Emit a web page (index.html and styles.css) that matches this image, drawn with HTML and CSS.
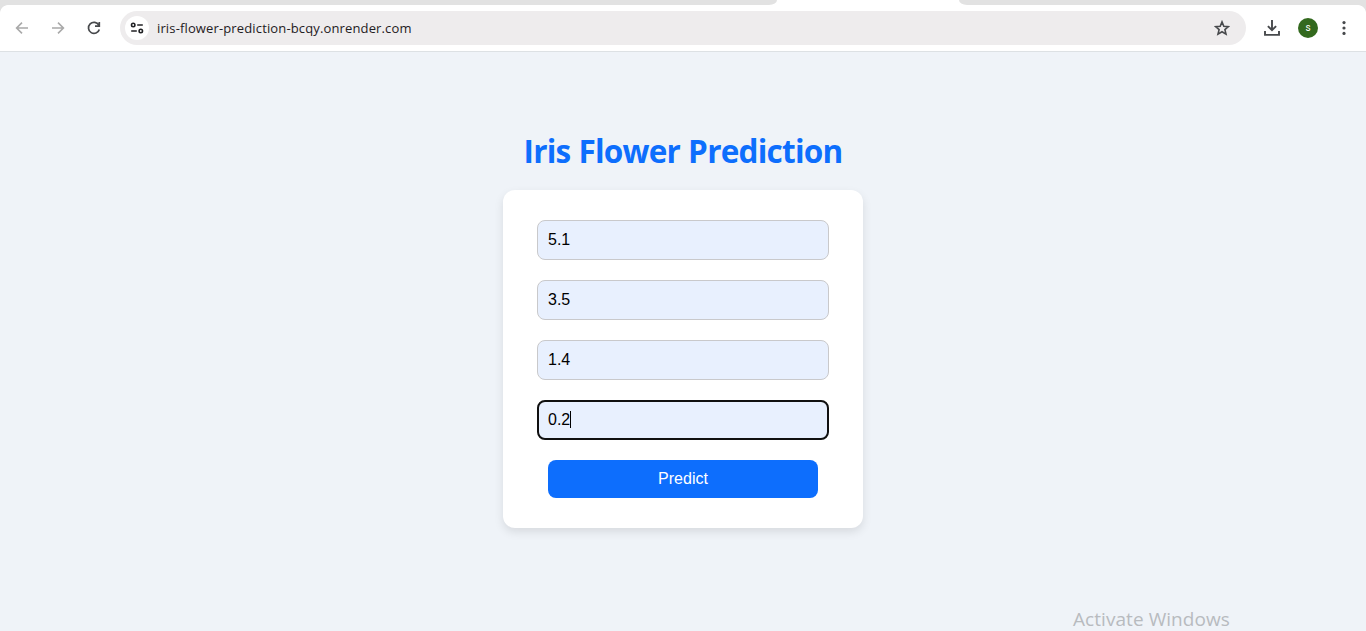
FILE: index.html
```html
<!DOCTYPE html>
<html lang="en">
<head>
<meta charset="utf-8">
<title>Iris Flower Prediction</title>
<link rel="stylesheet" href="styles.css">
</head>
<body>
<div class="tabstrip">
  <div class="tab-edge tab-edge-left"></div>
  <div class="tab-edge tab-edge-right"></div>
</div>
<header class="toolbar">
  <nav class="nav">
    <svg class="icon muted" viewBox="0 0 16 16"><path d="M14 8H2.8M8 2.6 2.6 8 8 13.4"/></svg>
    <svg class="icon muted" viewBox="0 0 16 16"><path d="M2 8h11.2M8 2.6 13.4 8 8 13.4"/></svg>
    <svg class="icon dark" viewBox="0 0 16 16"><path d="M12.8 5.2A5.5 5.5 0 1 0 13.3 9.4M13.3 2v4.2H9"/></svg>
  </nav>
  <div class="omnibox">
    <span class="site-info">
      <svg class="icon site-icon" viewBox="0 0 16 16"><circle cx="4.2" cy="5" r="1.7"/><path d="M8.2 5H13.8M2.2 11H7.8"/><circle cx="11.8" cy="11" r="1.7"/></svg>
    </span>
    <span class="url">iris-flower-prediction-bcqy.onrender.com</span>
    <svg class="icon star" viewBox="0 0 16 16"><path d="m8 1.9 1.8 4.3 4.6.4-3.5 3 1.1 4.5L8 11.7l-4 2.4 1.1-4.5-3.5-3 4.6-.4z"/></svg>
  </div>
  <div class="actions">
    <svg class="download" viewBox="0 0 16 16"><path d="M8 0v10M3.9 6.1 8 10.2l4.1-4.1M1 11v3.9h14V11"/></svg>
    <span class="avatar">s</span>
    <svg class="menu" viewBox="0 0 4 16"><circle cx="2" cy="2.6" r="1.6"/><circle cx="2" cy="8" r="1.6"/><circle cx="2" cy="13.4" r="1.6"/></svg>
  </div>
</header>
<main class="page">
  <h1 class="title">Iris Flower Prediction</h1>
  <form class="card">
    <input class="field" value="5.1">
    <input class="field" value="3.5">
    <input class="field" value="1.4">
    <div class="active-wrap">
      <input class="field field-active" value="0.2">
      <i class="caret"></i>
    </div>
    <button class="submit" type="button">Predict</button>
  </form>
</main>
<div class="watermark">Activate Windows</div>
</body>
</html>
```
FILE: styles.css
```css
* { box-sizing: border-box; }
body {
  margin: 0;
  height: 631px;
  overflow: hidden;
  background: #eff3f8;
  font-family: "Open Sans", "Noto Sans", sans-serif;
}
.tabstrip {
  height: 5px;
  display: flex;
  justify-content: space-between;
  background: #fff;
}
.tab-edge { background: #e2e2e2; }
.tab-edge-left { width: 777px; border-bottom-right-radius: 8px 5px; }
.tab-edge-right { width: 407px; border-bottom-left-radius: 8px 5px; }
.toolbar {
  height: 47px;
  display: flex;
  align-items: center;
  background: #fff;
  border-bottom: 1px solid #dde1e4;
  position: relative;
}
.toolbar::before,
.toolbar::after {
  content: "";
  position: absolute;
  top: 0;
  width: 8px;
  height: 8px;
}
.toolbar::before { left: 0; background: radial-gradient(circle at 8px 8px, transparent 7.5px, #e2e2e2 8.2px); }
.toolbar::after { right: 0; background: radial-gradient(circle at 0 8px, transparent 7.5px, #e2e2e2 8.2px); }
.icon { width: 16px; height: 16px; fill: none; stroke: #47494c; stroke-width: 1.6; flex: none; }
.nav { width: 120px; padding-left: 14px; display: flex; gap: 20px; flex: none; }
.muted { stroke: #a9a9a9; stroke-width: 1.6; }
.dark { stroke-width: 1.7; }
.omnibox {
  width: 1126px;
  height: 34px;
  padding: 0 16px 0 5px;
  display: flex;
  align-items: center;
  border-radius: 17px;
  background: #eeeced;
}
.site-info {
  width: 24px;
  height: 24px;
  display: grid;
  place-items: center;
  border-radius: 50%;
  background: #fff;
}
.site-icon { stroke: #202124; stroke-width: 1.6; }
.url { margin-left: 8px; flex: 1; color: #1f2023; font-size: 13px; line-height: 20px; letter-spacing: 0.14px; }
.star { stroke-width: 1.6; }
.actions { display: flex; align-items: center; padding-left: 18px; }
.download { width: 16px; height: 16px; fill: none; stroke: #47494c; stroke-width: 1.9; }
.avatar {
  width: 20px;
  height: 20px;
  margin: 0 24px 0 18px;
  border-radius: 50%;
  background: #33691e;
  color: #fff;
  font: 400 10px/19px Roboto, sans-serif;
  text-align: center;
}
.menu { width: 4px; height: 16px; fill: #47494c; }
.page { padding-top: 77px; }
.title {
  margin: 0;
  height: 61px;
  color: #0d6efd;
  font-size: 31.5px;
  line-height: 43px;
  font-weight: 700;
  text-align: center;
  white-space: nowrap;
  letter-spacing: -0.75px;
  word-spacing: 0.5px;
}
.card {
  width: 360px;
  height: 338px;
  margin: 0 auto;
  padding: 30px 34px;
  display: flex;
  flex-direction: column;
  align-items: center;
  gap: 20px;
  background: #fff;
  border-radius: 12px;
  box-shadow: 0 4px 10px rgba(0, 0, 0, .1);
}
.field {
  display: block;
  width: 292px;
  height: 40px;
  padding: 0 10px;
  border: 1px solid #c9c9cb;
  border-radius: 8px;
  background: #e8f0fe;
  color: #000;
  font: 16px "Liberation Sans", sans-serif;
  outline: 0;
}
.active-wrap { position: relative; }
.field-active { border: 2px solid #101010; padding: 0 9px; }
.caret { position: absolute; left: 33px; top: 11px; width: 1px; height: 17px; background: #000; }
.submit {
  width: 270px;
  height: 38px;
  padding: 0 0 1px;
  border: 0;
  border-radius: 8px;
  background: #0d6efd;
  color: #fff;
  font: 16px "Liberation Sans", sans-serif;
}
.watermark {
  position: absolute;
  left: 1073px;
  top: 606px;
  color: #b8bbbf;
  font-size: 19px;
  line-height: 26px;
  letter-spacing: 0.06px;
  white-space: nowrap;
}
```
